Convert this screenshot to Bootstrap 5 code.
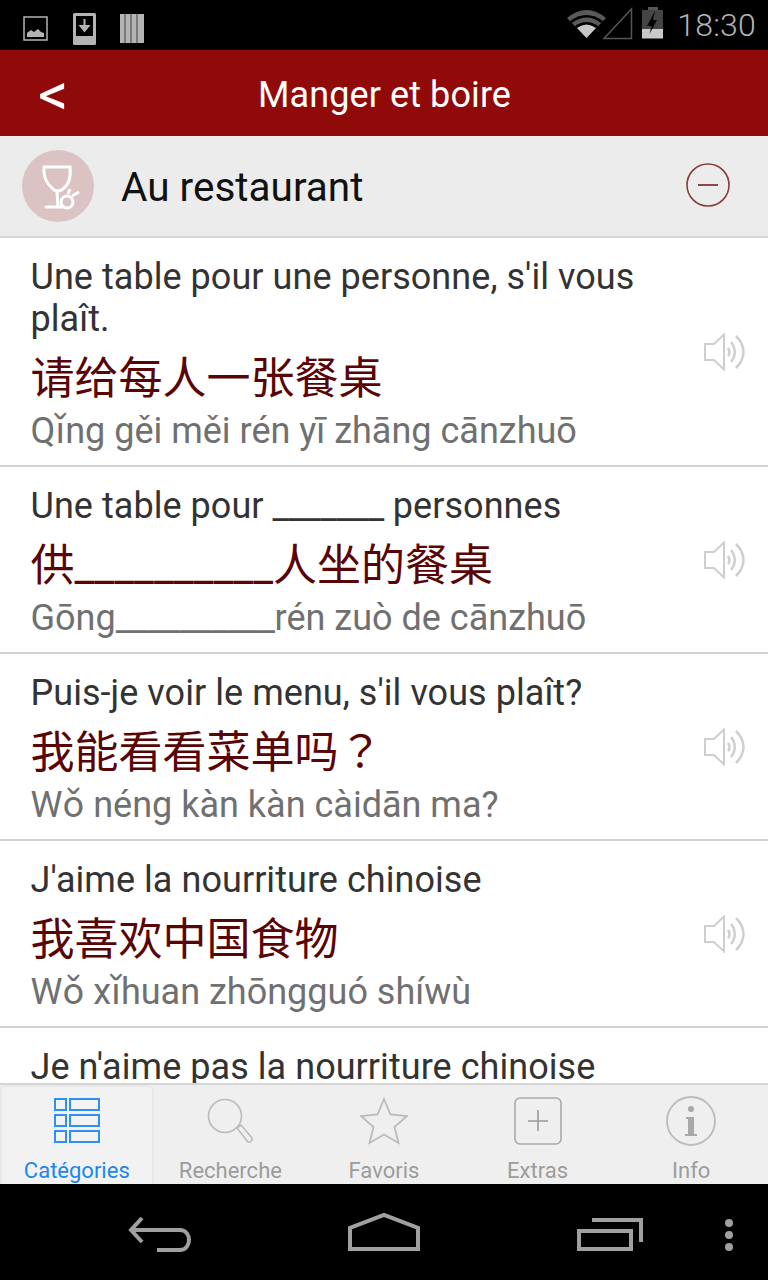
<!DOCTYPE html>
<html lang="fr">
<head>
  <meta charset="UTF-8" />
  <title>Manger et boire</title>
  <link href="https://cdn.jsdelivr.net/npm/bootstrap@5.3.3/dist/css/bootstrap.min.css" rel="stylesheet">
  <style>
    html, body { background: #000; }
    body {
      width: 768px;
      height: 1280px;
      overflow: hidden;
      font-family: Roboto, "Noto Sans CJK SC", sans-serif;
    }
    .phone-app { height: 1280px; }
    .status-strip { height: 50px; padding: 0 12px 0 22px; color: #b4b4b4; }
    .status-time { font-size: 32px; line-height: 50px; letter-spacing: .2px; font-weight: 300; margin-left: 14px; }
    .title-strip { height: 86px; background: #910a0a; color: #fff; }
    .title-text { font-size: 36px; line-height: 90px; letter-spacing: .1px; padding-left: 1px; }
    .back-link {
      left: 38px; top: 15px;
      color: #fff; font-size: 60px; line-height: 60px; font-weight: 400;
      text-decoration: none;
    }
    .section-strip {
      height: 102px;
      background: #ececec;
      border-bottom: 2px solid #d6d6d6;
      padding: 0 38px 0 22px;
    }
    .section-name { font-size: 40.5px; line-height: 98px; padding-top: 2px; color: #111; margin-left: 27px; }
    .section-toggle { margin-bottom: 2px; }
    .phrase-scroll { min-height: 0; background: #fff; }
    .phrase-row {
      border-bottom: 2px solid #d2d2d2;
      padding: 18px 22px 13px 30.5px;
    }
    .phrase-fr { font-size: 36px; line-height: 42px; color: #333; letter-spacing: .05px; }
    .phrase-zh { font-size: 44px; line-height: 60px; color: #5a0505; margin-top: 9px; }
    .phrase-py { font-size: 36px; line-height: 42px; color: #707070; margin-top: 1px; }
    .phrase-body { width: 640px; }
    .fill-blank { letter-spacing: -.35px; }
    .zh-mark { font-family: "Noto Sans CJK TC", sans-serif; line-height: 0; }
    .speaker-icon { margin-bottom: 4px; }
    .tab-strip { height: 101px; background: #efefef; border-top: 2px solid #d4d4d4; }
    .tab-item {
      width: 153.6px;
      color: #9c9c9c;
      font-size: 22px;
      line-height: 26px;
      padding-top: 10px;
      text-decoration: none;
    }
    .tab-item svg { display: block; height: 52px; margin-bottom: 11px; }
    .tab-item.is-current {
      color: #1a86f0;
      background: #f2f2f2;
      border: 2px solid #e8e8e8;
      border-bottom: 0;
      border-radius: 6px 6px 0 0;
      padding-top: 8px;
    }
    .nav-strip { height: 96px; background: #000; }
  </style>
</head>
<body>
  <div class="phone-app d-flex flex-column">

    <!-- android status bar -->
    <div class="status-strip d-flex align-items-center bg-black flex-shrink-0">
      <svg width="126" height="42" viewBox="0 0 126 42" fill="none">
        <rect x="2" y="13" width="23" height="23" fill="none" stroke="#b4b4b4" stroke-width="1.5"/>
        <path d="M5 33v-4l4-3 3 2 4-3 3 3 3 1v4z" fill="#b4b4b4"/>
        <rect x="51" y="9" width="23" height="32" rx="1.5" fill="#b4b4b4"/>
        <rect x="54" y="12" width="17" height="20" fill="#000"/>
        <path d="M62.5 15v11M58.5 22l4 5 4-5z" stroke="#b4b4b4" stroke-width="2" fill="#b4b4b4"/>
        <path d="M98 10h24v29h-24z" fill="#b4b4b4"/>
        <path d="M103 10v29M109 10v29M115 10v29" stroke="#555" stroke-width="1.2"/>
      </svg>
      <svg class="ms-auto" width="100" height="50" viewBox="564 0 100 50" fill="none">
        <path d="M587.5 38L568 18Q587.5 2 607 18z" fill="#5a5a5a"/>
        <path d="M587.5 38L571 21Q587.5 9 604 21z" fill="#000"/>
        <path d="M587.5 38L573 23Q587.5 12 602 23z" fill="#5a5a5a"/>
        <path d="M587.5 38L576 26Q587.5 18 599 26z" fill="#000"/>
        <path d="M587.5 38L578 28Q587.5 21 597 28z" fill="#c8c8c8"/>
        <path d="M632.5 9v29.5H605z" stroke="#555" stroke-width="1.5"/>
        <rect x="649" y="7" width="10" height="4" fill="#555"/>
        <rect x="643" y="10" width="21" height="19" fill="#444"/>
        <rect x="643" y="29" width="21" height="9.500" fill="#c8c8c8"/>
        <path d="M656 11l-8 15h4.500l-2 8 7.500-14h-4z" fill="#000"/>
      </svg>
      <span class="status-time">18:30</span>
    </div>

    <!-- title -->
    <div class="title-strip position-relative text-center flex-shrink-0">
      <a class="back-link position-absolute" href="#">&lt;</a>
      <div class="title-text">Manger et boire</div>
    </div>

    <!-- category header -->
    <div class="section-strip d-flex align-items-center flex-shrink-0">
      <svg width="72" height="72" viewBox="0 0 72 72" fill="none">
        <circle cx="36" cy="36" r="36" fill="#dcc3c3"/>
        <path d="M22 17h26c1 9 0 17-7 22-4 3-7 3-10 0-6-5-10-13-9-22z" stroke="#fff" stroke-width="3"/>
        <path d="M35 42l1 15M24 57h16" stroke="#fff" stroke-width="3" stroke-linecap="round"/>
        <circle cx="45" cy="52" r="6" stroke="#fff" stroke-width="3"/>
        <path d="M46 44l2-5M50 46l7-4" stroke="#fff" stroke-width="3"/>
      </svg>
      <div class="section-name flex-grow-1">Au restaurant</div>
      <svg class="section-toggle" width="44" height="44" viewBox="0 0 44 44" fill="none">
        <circle cx="22" cy="22" r="21" stroke="#8a3a3a" stroke-width="1.6"/>
        <path d="M12 22h20" stroke="#7c2020" stroke-width="1.6"/>
      </svg>
    </div>

    <!-- phrases -->
    <div class="phrase-scroll flex-grow-1 overflow-hidden">
      <div class="phrase-row d-flex align-items-center">
        <div class="phrase-body flex-shrink-0">
          <div class="phrase-fr">Une table pour une personne, s'il vous plaît.</div>
          <div class="phrase-zh" lang="zh-CN">请给每人一张餐桌</div>
          <div class="phrase-py">Qǐng gěi měi rén yī zhāng cānzhuō</div>
        </div>
        <svg class="speaker-icon ms-auto" width="42" height="38" viewBox="0 0 42 38" fill="none" stroke="#cfcfcf" stroke-width="2">
          <path d="M1 11h9L20 1.500v35L10 27H1z"/><path d="M24 15c2 3 2 6 0 8M27 9c5 6 5 14 0 20M32 3c10 10 10 22 0 32" stroke-width="2.500"/>
        </svg>
      </div>
      <div class="phrase-row d-flex align-items-center">
        <div class="phrase-body flex-shrink-0">
          <div class="phrase-fr">Une table pour <span class="fill-blank">_______</span> personnes</div>
          <div class="phrase-zh" lang="zh-CN">供__________人坐的餐桌</div>
          <div class="phrase-py">Gōng<span class="fill-blank">__________</span>rén zuò de cānzhuō</div>
        </div>
        <svg class="speaker-icon ms-auto" width="42" height="38" viewBox="0 0 42 38" fill="none" stroke="#cfcfcf" stroke-width="2">
          <path d="M1 11h9L20 1.500v35L10 27H1z"/><path d="M24 15c2 3 2 6 0 8M27 9c5 6 5 14 0 20M32 3c10 10 10 22 0 32" stroke-width="2.500"/>
        </svg>
      </div>
      <div class="phrase-row d-flex align-items-center">
        <div class="phrase-body flex-shrink-0">
          <div class="phrase-fr">Puis-je voir le menu, s'il vous plaît?</div>
          <div class="phrase-zh" lang="zh-CN">我能看看菜单吗<span class="zh-mark" lang="zh-TW">？</span></div>
          <div class="phrase-py">Wǒ néng kàn kàn càidān ma?</div>
        </div>
        <svg class="speaker-icon ms-auto" width="42" height="38" viewBox="0 0 42 38" fill="none" stroke="#cfcfcf" stroke-width="2">
          <path d="M1 11h9L20 1.500v35L10 27H1z"/><path d="M24 15c2 3 2 6 0 8M27 9c5 6 5 14 0 20M32 3c10 10 10 22 0 32" stroke-width="2.500"/>
        </svg>
      </div>
      <div class="phrase-row d-flex align-items-center">
        <div class="phrase-body flex-shrink-0">
          <div class="phrase-fr">J'aime la nourriture chinoise</div>
          <div class="phrase-zh" lang="zh-CN">我喜欢中国食物</div>
          <div class="phrase-py">Wǒ xǐhuan zhōngguó shíwù</div>
        </div>
        <svg class="speaker-icon ms-auto" width="42" height="38" viewBox="0 0 42 38" fill="none" stroke="#cfcfcf" stroke-width="2">
          <path d="M1 11h9L20 1.500v35L10 27H1z"/><path d="M24 15c2 3 2 6 0 8M27 9c5 6 5 14 0 20M32 3c10 10 10 22 0 32" stroke-width="2.500"/>
        </svg>
      </div>
      <div class="phrase-row">
        <div class="phrase-fr">Je n'aime pas la nourriture chinoise</div>
      </div>
    </div>

    <!-- tabs -->
    <div class="tab-strip d-flex flex-shrink-0">
      <a class="tab-item is-current text-center" href="#">
        <svg class="mx-auto" width="46" height="46" viewBox="0 0 46 46" fill="none" stroke="#2f8ff5" stroke-width="2">
          <rect x="1" y="1" width="11" height="11"/><rect x="16" y="1" width="29" height="11"/>
          <rect x="1" y="17" width="11" height="11"/><rect x="16" y="17" width="29" height="11"/>
          <rect x="1" y="33" width="11" height="11"/><rect x="16" y="33" width="29" height="11"/>
        </svg>
        Catégories
      </a>
      <a class="tab-item text-center" href="#">
        <svg class="mx-auto" width="46" height="46" viewBox="0 0 46 46" fill="none" stroke="#bbb" stroke-width="1.6">
          <circle cx="18" cy="18" r="16.500"/>
          <path d="M30 30l4-3 11 13c1 2-2 5-4 4z" fill="#efefef"/>
        </svg>
        Recherche
      </a>
      <a class="tab-item text-center" href="#">
        <svg class="mx-auto" width="48" height="48" viewBox="0 0 48 48" fill="none" stroke="#bbb" stroke-width="1.8">
          <path d="M24 2l6.500 15.500L47 19 34.500 30l4 16L24 37.500 9.500 46l4-16L1 19l16.500-1.500z"/>
        </svg>
        Favoris
      </a>
      <a class="tab-item text-center" href="#">
        <svg class="mx-auto" width="48" height="48" viewBox="0 0 48 48" fill="none" stroke="#aaa">
          <rect x="1" y="1" width="46" height="46" rx="5" stroke-width="1.6"/>
          <path d="M24 13v21M14 24h20" stroke="#999" stroke-width="1.6"/>
        </svg>
        Extras
      </a>
      <a class="tab-item text-center" href="#">
        <svg class="mx-auto" width="50" height="50" viewBox="0 0 50 50" fill="none">
          <circle cx="25" cy="25" r="24" stroke="#bbb" stroke-width="1.8"/>
          <circle cx="25" cy="13" r="3" fill="#a8a8a8"/>
          <path d="M20 21h8v17h3v2H19v-2h3V23h-2z" fill="#a8a8a8"/>
        </svg>
        Info
      </a>
    </div>

    <!-- android nav bar -->
    <div class="nav-strip flex-shrink-0">
      <svg class="d-block" width="768" height="96" viewBox="0 0 768 96" fill="none" stroke="#a0a0a0" stroke-width="4">
        <path d="M142 34l-11 12 11 12"/>
        <path d="M130 46h50c12 0 12 20 0 20h-23"/>
        <path d="M350 65V44l34-13 34 13v21z"/>
        <path d="M579 47h52v18h-52z"/>
        <path d="M592 36h49v22"/>
        <circle cx="729" cy="39" r="4" fill="#a0a0a0" stroke="none"/>
        <circle cx="729" cy="51" r="4" fill="#a0a0a0" stroke="none"/>
        <circle cx="729" cy="63" r="4" fill="#a0a0a0" stroke="none"/>
      </svg>
    </div>
  </div>
  <script src="https://cdn.jsdelivr.net/npm/bootstrap@5.3.3/dist/js/bootstrap.bundle.min.js"></script>
</body>
</html>
